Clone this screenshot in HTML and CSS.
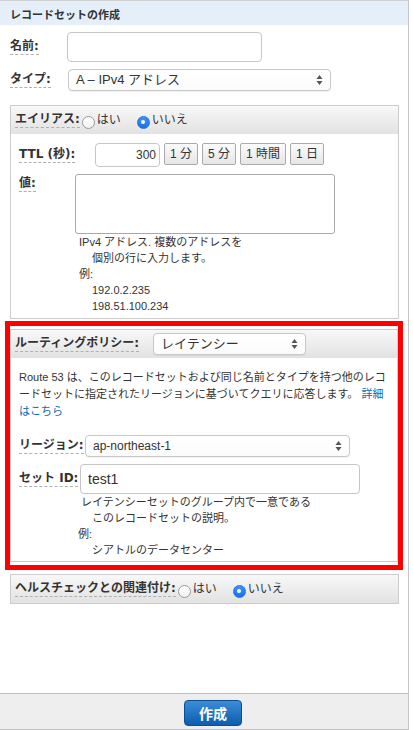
FILE: index.html
```html
<!DOCTYPE html>
<html lang="ja">
<head>
<meta charset="utf-8">
<title>レコードセットの作成</title>
<link rel="stylesheet" href="styles.css">
</head>
<body>
<div class="panel">
  <div class="title">レコードセットの作成</div>
  <div class="content">
    <div class="row r-name">
      <span class="lbl-cell"><span class="lbl">名前:</span></span>
      <input class="text name-input" type="text">
    </div>
    <div class="row r-type">
      <span class="lbl-cell"><span class="lbl">タイプ:</span></span>
      <div class="sel type-sel">
        <span class="sel-text">A – IPv4 アドレス</span>
        <svg class="arrows" width="7" height="12" viewBox="0 0 7 12"><polygon points="0.5,5 3.5,1 6.5,5" fill="#555"/><polygon points="0.5,7 3.5,11 6.5,7" fill="#555"/></svg>
      </div>
    </div>

    <div class="box alias">
      <div class="box-head">
        <span class="lbl">エイリアス:</span>
        <label class="radio"><span class="dot"></span>はい</label>
        <label class="radio"><span class="dot on"></span>いいえ</label>
      </div>
      <div class="box-body">
        <div class="row r-ttl">
          <span class="lbl-cell ttl-lbl"><span class="lbl">TTL (秒):</span></span>
          <input class="text ttl-input" type="text" value="300">
          <div class="btns">
            <button class="tbtn">1 分</button>
            <button class="tbtn">5 分</button>
            <button class="tbtn">1 時間</button>
            <button class="tbtn">1 日</button>
          </div>
        </div>
        <div class="row r-value">
          <span class="lbl-cell val-lbl"><span class="lbl">値:</span></span>
          <textarea class="textarea"></textarea>
        </div>
        <div class="help help-val">
          <div>IPv4 アドレス. 複数のアドレスを</div>
          <div class="ind">個別の行に入力します。</div>
          <div>例:</div>
          <div class="ind">192.0.2.235</div>
          <div class="ind">198.51.100.234</div>
        </div>
      </div>
    </div>

    <div class="highlight">
      <div class="box routing">
        <div class="box-head">
          <span class="lbl-cell route-lbl"><span class="lbl">ルーティングポリシー:</span></span>
          <div class="sel route-sel">
            <span class="sel-text">レイテンシー</span>
            <svg class="arrows" width="7" height="12" viewBox="0 0 7 12"><polygon points="0.5,5 3.5,1 6.5,5" fill="#555"/><polygon points="0.5,7 3.5,11 6.5,7" fill="#555"/></svg>
          </div>
        </div>
        <div class="box-body">
          <p class="desc">Route 53 は、このレコードセットおよび同じ名前とタイプを持つ他のレコードセットに指定されたリージョンに基づいてクエリに応答します。 <a href="#" class="link">詳細はこちら</a></p>
          <div class="row r-region">
            <span class="lbl-cell region-lbl"><span class="lbl">リージョン:</span></span>
            <div class="sel region-sel">
              <span class="sel-text">ap-northeast-1</span>
              <svg class="arrows" width="7" height="12" viewBox="0 0 7 12"><polygon points="0.5,5 3.5,1 6.5,5" fill="#555"/><polygon points="0.5,7 3.5,11 6.5,7" fill="#555"/></svg>
            </div>
          </div>
          <div class="row r-setid">
            <span class="lbl-cell setid-lbl"><span class="lbl">セット ID:</span></span>
            <input class="text setid-input" type="text" value="test1">
          </div>
          <div class="help help-setid">
            <div>レイテンシーセットのグループ内で一意である</div>
            <div class="ind">このレコードセットの説明。</div>
            <div class="ex">例:</div>
            <div class="ind">シアトルのデータセンター</div>
          </div>
        </div>
      </div>
    </div>

    <div class="box health">
      <div class="box-head">
        <span class="lbl">ヘルスチェックとの関連付け:</span>
        <label class="radio"><span class="dot"></span>はい</label>
        <label class="radio"><span class="dot on"></span>いいえ</label>
      </div>
    </div>
  </div>
  <div class="footer">
    <button class="create">作成</button>
  </div>
</div>
</body>
</html>
```

FILE: styles.css
```css
* { box-sizing: border-box; }
html, body { margin: 0; padding: 0; background: #fff; }
body {
  font-family: "Liberation Sans", "Noto Sans CJK JP", sans-serif;
  color: #333;
  width: 413px;
  height: 730px;
  overflow: hidden;
}
.panel {
  width: 409px;
  height: 730px;
  border-top: 1px solid #d0d0d0;
  border-right: 1px solid #c4c4c4;
  display: flex;
  flex-direction: column;
}
.title {
  background: #e5eff9;
  height: 24px;
  padding: 3px 0 0 10px;
  font-family: "Noto Sans CJK JP", sans-serif;
  font-weight: bold;
  font-size: 11px;
  line-height: 20px;
  color: #333;
}
.content {
  flex: 1;
  padding: 7px 0 0 10px;
}
.row { display: flex; align-items: center; }
.lbl-cell { flex: none; display: flex; }
.lbl {
  font-family: "DejaVu Sans", "Noto Sans CJK JP", sans-serif;
  font-weight: bold;
  font-size: 12px;
  line-height: 15px;
  color: #333;
  border-bottom: 1px dashed #b0b0b0;
  white-space: nowrap;
}
.text {
  border: 1px solid #c6c6c6;
  border-radius: 4px;
  background: #fff;
  font-family: "Liberation Sans", "Noto Sans CJK JP", sans-serif;
  color: #333;
  outline: none;
  margin: 0;
}
.r-name .lbl-cell { width: 57px; padding-top: 0; }
.name-input { width: 195px; height: 30px; }
.r-type { margin-top: 7px; }
.r-type .lbl-cell { width: 58px; }

.sel {
  position: relative;
  display: flex;
  align-items: center;
  height: 22px;
  border: 1px solid #c8c8c8;
  border-radius: 4px;
  background: linear-gradient(#fff, #fbfbfb);
  box-shadow: 0 1px 1px rgba(0,0,0,0.06);
  padding-left: 7px;
  color: #333;
  white-space: nowrap;
}
.sel-text { font-size: 13px; line-height: 20px; }
.arrows { position: absolute; right: 7px; top: 4px; }
.type-sel { width: 263px; }

.box {
  border: 1px solid #cccccc;
  background: #fff;
}
.box-head {
  height: 28px;
  display: flex;
  align-items: center;
  padding-left: 4px;
  background: linear-gradient(#f8f8f8, #e2e2e2);
}
.alias { margin-top: 14px; width: 389px; }
.box-body { padding: 9px 8px 4px 8px; }

.radio {
  display: inline-flex;
  align-items: center;
  font-size: 12px;
  line-height: 16px;
  color: #333;
  margin-right: 14px;
}
.radio .dot {
  width: 13px;
  height: 13px;
  border-radius: 50%;
  border: 1px solid #9a9a9a;
  background: linear-gradient(#fff, #f2f2f2);
  margin: 4px 2px 0 2px;
  position: relative;
}
.radio .dot.on {
  border-color: #1b74e8;
  background: linear-gradient(#3d92f6, #1673ea);
}
.radio .dot.on::after {
  content: "";
  position: absolute;
  width: 4px;
  height: 4px;
  border-radius: 50%;
  background: #fff;
  left: 3.5px;
  top: 3.5px;
}

.ttl-lbl { width: 76px; }
.ttl-input {
  width: 65px;
  height: 24px;
  text-align: right;
  padding-right: 3px;
  font-size: 12px;
}
.btns { display: flex; gap: 4px; margin-left: 4px; align-self: flex-start; }
.tbtn {
  height: 22px;
  padding: 0 5px;
  margin: 0;
  border: 1px solid #ababab;
  border-radius: 2px;
  background: linear-gradient(#fbfbfb, #e6e6e6);
  font-family: "Liberation Sans", "Noto Sans CJK JP", sans-serif;
  font-size: 12px;
  color: #333;
  line-height: 20px;
}
.r-value { margin-top: 7px; align-items: flex-start; }
.val-lbl { width: 56px; padding-top: 2px; }
.textarea {
  width: 260px;
  height: 60px;
  border: 1px solid #a8a8a8;
  border-radius: 3px;
  margin: 0;
  resize: none;
  outline: none;
}
.help {
  font-size: 11px;
  line-height: 16px;
  color: #333;
}
.help .ind { padding-left: 13px; }
.help-val { margin-left: 60px; }

.highlight {
  margin: 2px 0 0 -5px;
  width: 398px;
  border: 5px solid #fe0000;
  padding: 3px 0 3px 0;
}
.routing { width: 388px; }
.route-lbl { width: 138px; }
.route-sel { width: 153px; }
.desc {
  margin: 2px 0 0 0;
  font-size: 11px;
  line-height: 17px;
  color: #333;
}
.link { color: #0b6ab8; text-decoration: none; }
.r-region { margin-top: 15px; }
.region-lbl { width: 66px; }
.region-sel { width: 265px; }
.region-sel .sel-text { font-size: 12px; }
.r-setid { margin-top: 7px; }
.setid-lbl { width: 61px; }
.setid-input {
  width: 280px;
  height: 30px;
  font-size: 14px;
  padding-left: 7px;
}
.help-setid { margin-left: 62px; margin-bottom: -1px; }
.help-setid .ind { padding-left: 11px; }
.help-setid .ex { margin-left: -3px; }

.health { margin-top: 4px; width: 389px; }

.footer {
  height: 37px;
  background: #eeeeee;
  border-top: 1px solid #bdbdbd;
  border-bottom: 1px solid #bdbdbd;
  display: flex;
  justify-content: center;
  align-items: flex-start;
  padding: 6px 0 0 18px;
}
.create {
  width: 58px;
  height: 26px;
  margin: 0;
  border: 1px solid #0b4f92;
  border-radius: 4px;
  background: linear-gradient(#3c8cd8, #0b5eae);
  color: #fff;
  font-family: "Noto Sans CJK JP", sans-serif;
  font-weight: bold;
  font-size: 14px;
  line-height: 22px;
  padding: 0;
}
```
